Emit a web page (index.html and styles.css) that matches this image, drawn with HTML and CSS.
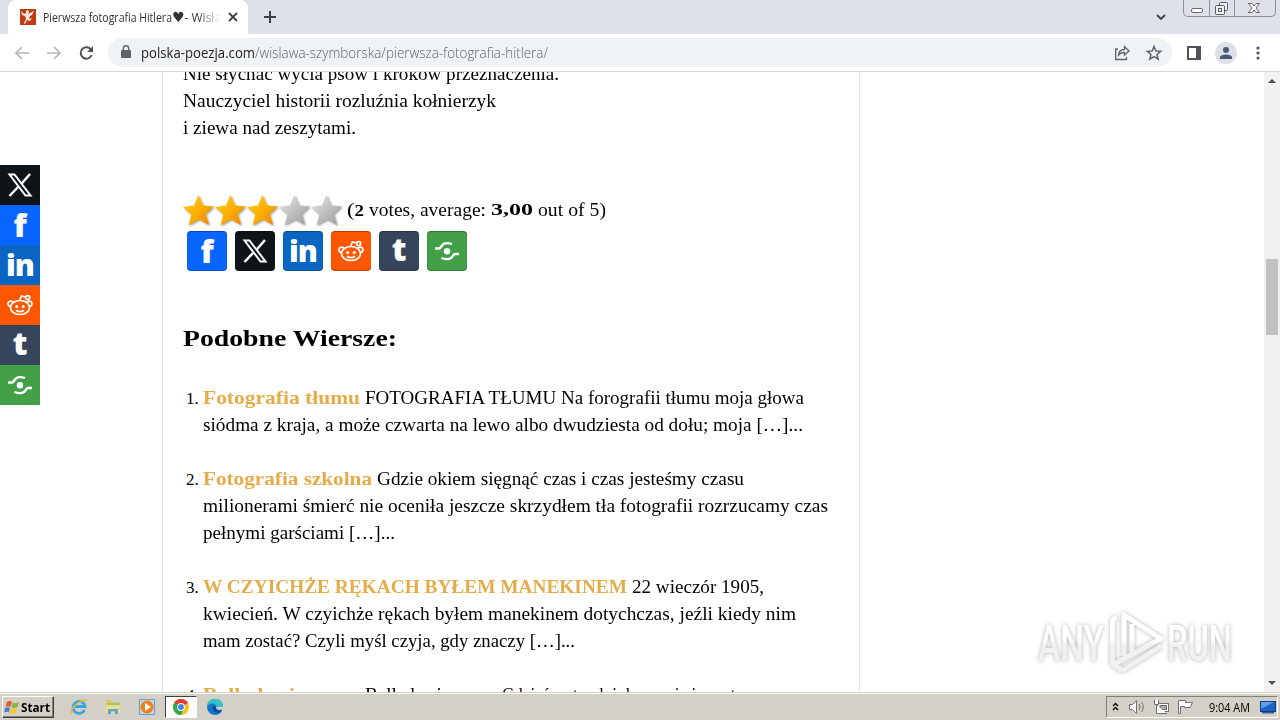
FILE: index.html
```html
<!DOCTYPE html>
<html lang="pl">
<head>
    <meta charset="UTF-8">
    <meta name="viewport" content="width=device-width, initial-scale=1.0">
    <title>Pierwsza fotografia Hitlera</title>
    <link rel="stylesheet" href="styles.css">
</head>
<body>
    <!-- shared icons -->
    <svg class="defs">
        <defs>
            <linearGradient id="gold" x1="0" y1="0" x2="1" y2="1">
                <stop offset="0" stop-color="#ffd21c"/>
                <stop offset="0.5" stop-color="#ffb000"/>
                <stop offset="1" stop-color="#f08000"/>
            </linearGradient>
            <linearGradient id="silver" x1="0" y1="0" x2="1" y2="1">
                <stop offset="0" stop-color="#e6e6e6"/>
                <stop offset="1" stop-color="#9a9a9a"/>
            </linearGradient>
            <symbol id="star" viewBox="0 0 32 32">
                <path d="M15.500 0 L20.200 10.500 L31 11.500 L22.700 19 L26 30 L16 24.500 L5.500 30.500 L8.300 19.500 L0 12 L11 10.500 Z"/>
            </symbol>
            <symbol id="x" viewBox="0 0 40 40">
                <g fill="none" stroke="#fff">
                    <path stroke-width="2" d="M9.500 9.500 H14.500 L30.500 30.500 H25.500 Z"/>
                    <path stroke-width="2.500" d="M30 9 L21.500 18.700 M18 22 L9.500 31"/>
                </g>
            </symbol>
            <symbol id="reddit" viewBox="0 0 40 40">
                <g fill="none" stroke="#fff" stroke-width="1.700">
                    <ellipse cx="20" cy="22.500" rx="9.500" ry="7"/>
                    <path d="M13 17.500 A2.700 2.700 0 1 0 10.300 21.500 M27 17.500 A2.700 2.700 0 1 1 29.700 21.500 M19.500 15.500 L21.500 11 L25.500 12"/>
                    <circle cx="27.700" cy="12.600" r="2"/>
                    <path d="M16 25.300 Q20 28 24 25.300"/>
                </g>
                <circle cx="16.700" cy="21.500" r="1.600" fill="#fff"/>
                <circle cx="23.300" cy="21.500" r="1.600" fill="#fff"/>
            </symbol>
            <symbol id="share" viewBox="0 0 40 40">
                <circle cx="20" cy="20.300" r="3.200" fill="#fff"/>
                <g fill="none" stroke="#fff" stroke-width="2.300">
                    <path d="M8 17.500 H11.500 Q13.500 17.500 14.500 15 Q17.500 10.500 25 13"/>
                    <path d="M32 23 H28.500 Q26.500 23 25.500 25.500 Q22 30 14.500 27"/>
                </g>
            </symbol>
            <linearGradient id="fade" gradientUnits="userSpaceOnUse" x1="0" y1="8" x2="0" y2="68">
                <stop offset="0.45" stop-color="#fff"/>
                <stop offset="0.55" stop-color="#f1f1f1"/>
            </linearGradient>
        </defs>
    </svg>

    <div class="tabs">
        <div class="tab">
            <svg class="favicon" width="16" height="16" viewBox="0 0 16 16">
                <rect width="16" height="16" fill="#bf3c14"/>
                <path d="M1 2 L4 5 L6 4 L6 2 L8 1 L9 3 L8 5 L14 2 L12 6 L10 7 L9 10 L12 9 L10 12 L7 11 L5 15 L4 14 L6 10 L5 7 L2 6 Z" fill="#ffe9dc"/>
            </svg>
            <div class="tab-title"><span data-fit="129">Pierwsza fotografia Hitlera</span><span class="heart">♥</span><span>- Wisła</span></div>
            <svg width="10" height="10" viewBox="0 0 10 10"><path d="M1 1 L9 9 M9 1 L1 9" stroke="#3c4043" stroke-width="1.800"/></svg>
        </div>
        <svg class="new-tab" width="12" height="12" viewBox="0 0 12 12"><path d="M6 0 V12 M0 6 H12" stroke="#3c4043" stroke-width="2"/></svg>
        <svg class="tab-search" width="10" height="7" viewBox="0 0 10 7"><path d="M1 1 L5 5 L9 1" fill="none" stroke="#3c4043" stroke-width="1.800"/></svg>
        <div class="win-buttons">
            <span><svg width="26" height="16"><rect x="7.500" y="8.500" width="11" height="4" rx="1.500" fill="#fff" stroke="#63676f"/></svg></span>
            <span><svg width="25" height="16"><g fill="#eef0f4" stroke="#555a63"><rect x="9.500" y="2.500" width="8" height="8" rx="1"/><rect x="5.500" y="5.500" width="9" height="9" rx="1"/><rect x="8.500" y="8.500" width="3" height="3"/></g></svg></span>
            <span><svg width="40" height="16"><path d="M13.500 3.500 H17 L19 6 L21 3.500 H24.500 L21 8 L24.500 12.500 H21 L19 10 L17 12.500 H13.500 L17 8 Z" fill="#fff" stroke="#63676f"/></svg></span>
        </div>
    </div>

    <div class="toolbar">
        <svg class="nav" width="96" height="36" viewBox="0 0 96 36">
            <g fill="none" stroke="#b4b6b9" stroke-width="1.700">
                <path d="M29 18 H16 M22 12 L16 18 L22 24"/>
                <path d="M47 18 H60 M54 12 L60 18 L54 24"/>
            </g>
            <path d="M91.300 15 A5.700 5.700 0 1 0 91.700 20" fill="none" stroke="#505357" stroke-width="2"/>
            <path d="M93 11 V17 H87 Z" fill="#505357"/>
        </svg>
        <div class="omnibox">
            <svg class="lock" width="10" height="13" viewBox="0 0 10 13">
                <rect y="5" width="10" height="8" rx="1" fill="#5f6368"/>
                <path d="M2.300 6 V3.500 A2.700 2.700 0 0 1 7.700 3.500 V6" fill="none" stroke="#5f6368" stroke-width="1.400"/>
            </svg>
            <span class="host" data-fit="114">polska-poezja.com</span><span class="path" data-fit="293">/wislawa-szymborska/pierwsza-fotografia-hitlera/</span>
            <svg class="omni-icons" width="56" height="28" viewBox="0 0 56 28">
                <g fill="none" stroke="#5f6368" stroke-width="1.300">
                    <path d="M4 10 H1.700 V20.500 H12.500 V18"/>
                    <path d="M4.500 16 Q5 10.500 10.500 10.500 V7.500 L15 12 L10.500 16 V13.500 Q6.500 13.500 4.500 16 Z"/>
                    <path stroke-width="1.500" d="M40 7.500 L41.900 12 L46.700 12.300 L43 15.500 L44.200 20.200 L40 17.600 L35.800 20.200 L37 15.500 L33.300 12.300 L38.100 12 Z"/>
                </g>
            </svg>
        </div>
        <svg class="side-panel" width="14" height="14"><rect x="1" y="1" width="12" height="12" fill="none" stroke="#505357" stroke-width="2"/><rect x="9" width="5" height="14" fill="#505357"/></svg>
        <svg class="avatar" width="22" height="22"><circle cx="11" cy="11" r="11" fill="#dde1e7"/><circle cx="11" cy="8" r="3" fill="#4a5878"/><path d="M5 17 V15 Q6 12.500 11 12.500 Q16 12.500 17 15 V17 Z" fill="#4a5878"/></svg>
        <svg class="menu" width="4" height="14"><g fill="#505357"><circle cx="2" cy="2" r="1.600"/><circle cx="2" cy="7" r="1.600"/><circle cx="2" cy="12" r="1.600"/></g></svg>
    </div>

    <div class="page">
        <main class="article">
            <div class="line"><span data-fit="376">Nie słychać wycia psów i kroków przeznaczenia.</span></div>
            <div class="line"><span data-fit="313">Nauczyciel historii rozluźnia kołnierzyk</span></div>
            <div class="line"><span data-fit="173">i ziewa nad zeszytami.</span></div>

            <div class="rating">
                <svg width="32" height="32"><use href="#star" fill="url(#gold)"/></svg>
                <svg width="32" height="32"><use href="#star" fill="url(#gold)"/></svg>
                <svg width="32" height="32"><use href="#star" fill="url(#gold)"/></svg>
                <svg width="32" height="32"><use href="#star" fill="url(#silver)"/></svg>
                <svg width="32" height="32"><use href="#star" fill="url(#silver)"/></svg>
                <div class="line votes"><span data-fit="17">(<b>2</b></span><span data-fit="117">votes, average:</span><b data-fit="42">3,00</b><span data-fit="68">out of 5)</span></div>
            </div>

            <div class="share-row">
                <a class="share facebook"><span>f</span></a>
                <a class="share twitter"><svg><use href="#x"/></svg></a>
                <a class="share linkedin"><span>in</span></a>
                <a class="share reddit"><svg><use href="#reddit"/></svg></a>
                <a class="share tumblr"><span>t</span></a>
                <a class="share more"><svg><use href="#share"/></svg></a>
            </div>

            <h3><span data-fit="214">Podobne Wiersze:</span></h3>
            <ol>
                <li>
                    <div class="line"><a data-fit="157">Fotografia tłumu</a><span data-fit="439">FOTOGRAFIA TŁUMU Na forografii tłumu moja głowa</span></div>
                    <div class="line"><span data-fit="600">siódma z kraja, a może czwarta na lewo albo dwudziesta od dołu; moja […]...</span></div>
                </li>
                <li>
                    <div class="line"><a data-fit="169">Fotografia szkolna</a><span data-fit="367">Gdzie okiem sięgnąć czas i czas jesteśmy czasu</span></div>
                    <div class="line"><span data-fit="625">milionerami śmierć nie oceniła jeszcze skrzydłem tła fotografii rozrzucamy czas</span></div>
                    <div class="line"><span data-fit="192">pełnymi garściami […]...</span></div>
                </li>
                <li>
                    <div class="line"><a data-fit="424">W CZYICHŻE RĘKACH BYŁEM MANEKINEM</a><span data-fit="132">22 wieczór 1905,</span></div>
                    <div class="line"><span data-fit="593">kwiecień. W czyichże rękach byłem manekinem dotychczas, jeźli kiedy nim</span></div>
                    <div class="line"><span data-fit="372">mam zostać? Czyli myśl czyja, gdy znaczy […]...</span></div>
                </li>
                <li>
                    <div class="line"><a data-fit="157">Ballada ziemowa</a><span data-fit="132">Ballada ziemowa</span><span data-fit="242">Gdzieś, ostrych i drzewa i zimy oto</span></div>
                </li>
            </ol>
        </main>

        <div class="share-bar">
            <a class="share twitter"><svg><use href="#x"/></svg></a>
            <a class="share facebook"><span>f</span></a>
            <a class="share linkedin"><span>in</span></a>
            <a class="share reddit"><svg><use href="#reddit"/></svg></a>
            <a class="share tumblr"><span>t</span></a>
            <a class="share more"><svg><use href="#share"/></svg></a>
        </div>

        <div class="scrollbar">
            <svg width="8" height="4"><path d="M0 4 L4 0 L8 4 Z" fill="#505050"/></svg>
            <div class="thumb"></div>
            <svg width="8" height="4"><path d="M0 0 L4 4 L8 0 Z" fill="#505050"/></svg>
        </div>

        <svg class="watermark" width="210" height="76" viewBox="0 0 210 76">
            <text x="8" y="57" textLength="66" lengthAdjust="spacingAndGlyphs">ANY</text>
            <g fill="none" stroke="url(#fade)" stroke-width="5" stroke-linejoin="round">
                <path d="M82.500 62 V18 Q82.500 14 87 14"/>
                <path d="M133 36 L94 11 V44 M94 11 V52"/>
                <path d="M102 20 V48"/>
                <path d="M82.500 61 L130 35 M92 67 L131 42 M82.500 61 Q88 62 92 67"/>
            </g>
            <text x="137" y="57" textLength="65" lengthAdjust="spacingAndGlyphs">RUN</text>
        </svg>
    </div>

    <div class="taskbar">
        <div class="start">
            <svg width="16" height="16" viewBox="0 0 16 16">
                <path d="M3 3 Q6 1 8 3 L6.500 8 Q4 6.500 1.500 8 Z" fill="#e8592b"/>
                <path d="M9 3.500 Q12 5 15 3 L13.500 8 Q10.500 9.500 7.500 8.500 Z" fill="#7fb83d"/>
                <path d="M1.200 9 Q4 7.500 6 9 L4.800 13.500 Q2.500 12 0 13.500 Z" fill="#3f83d3"/>
                <path d="M7 9.500 Q10 11 13 9 L11.800 14 Q8.500 15.500 5.800 14 Z" fill="#f8c52c"/>
            </svg>
            <span data-fit="29">Start</span>
        </div>
        <div class="quick">
            <span class="app"><svg width="18" height="18" viewBox="0 0 18 18">
                <path d="M14.500 12 A6 6 0 1 1 15 8.500 H5" fill="none" stroke="#3aa5e0" stroke-width="2.800"/>
                <path d="M2 16 Q-1 12 7 6 Q15 0 16.500 3" fill="none" stroke="#e8bc3c" stroke-width="1.500"/>
            </svg></span>
            <span class="app"><svg width="18" height="18" viewBox="0 0 18 18">
                <path d="M2 2 H7 L8 4 H15 V15 H2 Z" fill="#e9c659"/>
                <rect x="3" y="5" width="13" height="3" fill="#8fc98a"/>
                <path d="M2 7 H16 V15 H2 Z" fill="#f5dc85"/>
                <path d="M4 16 V11 H14 V16 H11 V13.500 H7 V16 Z" fill="#5ba6d6"/>
            </svg></span>
            <span class="app"><svg width="18" height="18" viewBox="0 0 18 18">
                <rect x="1.500" y="1.500" width="15" height="15" fill="#bcd7ee" stroke="#6c9cc8"/>
                <circle cx="9" cy="9" r="6.500" fill="#f08119"/>
                <path d="M7 5 L13 9 L7 13 Z" fill="#fff"/>
            </svg></span>
            <span class="app active"><svg width="16" height="16" viewBox="0 0 16 16">
                <circle cx="8" cy="8" r="8" fill="#fbc116"/>
                <path d="M8 8 L1.070 4 A8 8 0 0 1 14.930 4 Z" fill="#e33b2e"/>
                <path d="M8 8 L1.070 4 A8 8 0 0 0 8 16 L11 9.500 Z" fill="#2da94f"/>
                <circle cx="8" cy="8" r="3.900" fill="#fff"/>
                <circle cx="8" cy="8" r="2.900" fill="#4285f4"/>
            </svg></span>
            <span class="app"><svg width="16" height="16" viewBox="0 0 16 16">
                <circle cx="8" cy="8" r="8" fill="#1377cf"/>
                <path d="M0 8 A8 8 0 0 1 16 7 Q16 10.500 12 10.500 Q9 10.500 9.500 8 Q9 4 4.500 4.500 Q1 5 0 8 Z" fill="#35c1c6"/>
                <path d="M5.500 8 Q5 13 11 14 Q13.500 13.500 15 11.500 Q9.500 13 9 8.500 Q8 6 5.500 8 Z" fill="#124a92"/>
                <path d="M9.200 8 Q9 11.500 14.500 10.500 L16 12 V8 Z" fill="#d4d0c8"/>
            </svg></span>
        </div>
        <div class="tray">
            <svg width="90" height="22" viewBox="0 0 90 22">
                <path d="M6 10 L8.500 7.500 L11 10 M6 14 L8.500 11.500 L11 14" fill="none" stroke="#111" stroke-width="1.500"/>
                <g fill="#fff" stroke="#73716d">
                    <path d="M22.500 8.500 H25.500 L29.500 4.500 V17.500 L25.500 13.500 H22.500 Z"/>
                    <path fill="none" d="M32 8 Q34 11 32 14 M34.500 6 Q38 11 34.500 16"/>
                    <rect x="50.500" y="7.500" width="11" height="8"/>
                    <rect x="53" y="9.500" width="6.500" height="4" fill="#aaa"/>
                    <path d="M47.500 4 V8.500 H51.500 V4 M49.500 9 V17.500 H60"/>
                    <path d="M71.500 17.500 V4.500 H78.500 V6.500 H85.500 L83 11.500 H77.500 V10.500 H73.500 V17.500 Z"/>
                </g>
            </svg>
            <span class="clock" data-fit="41">9:04 AM</span>
            <svg class="desktop" width="16" height="14"><rect x=".5" y="1.500" width="15" height="10" fill="#1c62c4" stroke="#123c80"/><path d="M1 2 H14 L1 9 Z" fill="#5d9ee8"/><rect x="2" y="12" width="12" height="1.500" fill="#3c5b8a"/></svg>
        </div>
    </div>

    <script>
        // Stretch each label to the width it was laid out for
        const labels = [...document.querySelectorAll('[data-fit]')];
        const widths = labels.map(el => el.getBoundingClientRect().width);

        labels.forEach((el, i) => {
            el.style.width = el.dataset.fit + 'px';
            el.style.transform = 'scaleX(' + el.dataset.fit / widths[i] + ')';
        });
    </script>
</body>
</html>
```
FILE: styles.css
```css
* {
    box-sizing: border-box;
}

body {
    margin: 0;
    width: 1280px;
    height: 720px;
    overflow: hidden;
    display: flex;
    flex-direction: column;
    background: #fff;
    font-family: "Open Sans", "Noto Sans", sans-serif;
}

svg {
    display: block;
    flex: none;
}

.defs {
    position: absolute;
    width: 0;
    height: 0;
}

[data-fit] {
    display: inline-block;
    flex: none;
    white-space: nowrap;
    transform-origin: left;
}

/* browser window */
.tabs {
    height: 34px;
    flex: none;
    display: flex;
    background: #dee1e9;
    padding-left: 8px;
}

.tab {
    width: 240px;
    height: 34px;
    background: #fff;
    border-radius: 8px 8px 0 0;
    display: flex;
    align-items: center;
    padding-left: 12px;
}

.tab-title {
    display: flex;
    align-items: center;
    white-space: nowrap;
    width: 177px;
    margin: 0 8px 0 7px;
    overflow: hidden;
    font-size: 12px;
    color: #303236;
    -webkit-mask-image: linear-gradient(to right, #000 155px, transparent 177px);
    mask-image: linear-gradient(to right, #000 155px, transparent 177px);
}

.heart {
    width: 15px;
    font: 14px/16px "DejaVu Sans", sans-serif;
}

.new-tab {
    margin: 11px 0 0 16px;
}

.tab-search {
    margin: 14px 17px 0 auto;
}

.win-buttons {
    display: flex;
    width: 93px;
    height: 17px;
    margin-right: 4px;
    border: 1px solid #8b8f98;
    border-top: 0;
    border-radius: 0 0 5px 5px;
}

.win-buttons span + span {
    border-left: 1px solid #8b8f98;
}

.win-buttons span:nth-child(-n+2) {
    width: 25px;
}

.toolbar {
    height: 38px;
    flex: none;
    display: flex;
    align-items: center;
    border-bottom: 1px solid #d5d7da;
}

.omnibox {
    width: 1064px;
    height: 29px;
    margin-left: 12px;
    border-radius: 15px;
    background: #f0f3f6;
    display: flex;
    align-items: center;
    font-size: 14px;
    font-weight: 300;
}

.lock {
    margin: 0 10px 2px 13px;
}

.host {
    color: #202124;
    font-weight: 400;
}

.path {
    color: #5f6368;
}

.omni-icons {
    margin: 0 2px 0 auto;
}

.side-panel {
    margin-left: 15px;
}

.avatar {
    margin-left: 14px;
}

.menu {
    margin-left: 19px;
}

/* poem page */
.page {
    position: relative;
    height: 620px;
    flex: none;
    overflow: hidden;
}

.article {
    width: 698px;
    height: 700px;
    margin: -12px 0 0 162px;
    padding-left: 20px;
    border: 1px solid #e3e3e3;
    border-width: 0 1px;
    font-family: "Liberation Serif", serif;
    font-size: 19px;
    color: #000;
}

.line {
    height: 27px;
    line-height: 27px;
    display: flex;
    gap: 5px;
    white-space: nowrap;
}

.rating {
    display: flex;
    height: 32px;
    margin-top: 54px;
}

.rating svg {
    filter: drop-shadow(1px 1px 1px rgba(0, 0, 0, 0.4));
}

.votes {
    margin: 1px 0 0 4px;
}

.votes b {
    font-size: 16px;
}

.share-row {
    display: flex;
    gap: 8px;
    margin: 4px 0 0 4px;
}

.share {
    width: 40px;
    height: 40px;
    display: flex;
    justify-content: center;
    align-items: center;
    color: #fff;
    font: 800 32px/32px "Open Sans", sans-serif;
}

.share svg {
    width: 40px;
    height: 40px;
}

.share-row .share {
    border-radius: 4px;
    box-shadow: inset 0 1px 1px rgba(0, 0, 0, 0.3), inset 0 -1px 1px rgba(0, 0, 0, 0.2);
}

.facebook {
    background: #0866ff;
}

.twitter {
    background: #0f1419;
}

.linkedin {
    background: #0a66c2;
    letter-spacing: -1px;
    font-size: 30px;
}

.linkedin span {
    margin-top: -1px;
}

.reddit {
    background: #ff5700;
}

.tumblr {
    background: #35465c;
}

.tumblr span {
    margin-top: -4px;
}

.more {
    background: #43a047;
}

h3 {
    margin: 51px 0 0;
    height: 32px;
    font-size: 24px;
    line-height: 32px;
}

ol {
    margin: 30px 0 0;
    padding-left: 20px;
}

li {
    margin-bottom: 27px;
    line-height: 27px;
}

li::marker {
    font-size: 17px;
}

li a {
    color: #e5ac49;
    font-weight: bold;
}

.share-bar {
    position: absolute;
    left: 0;
    top: 93px;
}

.scrollbar {
    position: absolute;
    top: 0;
    right: 0;
    width: 16px;
    height: 620px;
    padding: 7px 0;
    display: flex;
    flex-direction: column;
    align-items: center;
    background: #f1f1f1;
}

.thumb {
    width: 12px;
    height: 76px;
    margin: 176px 0 auto;
    background: #c1c1c1;
}

.watermark {
    position: absolute;
    left: 1030px;
    top: 532px;
    filter: drop-shadow(0 0 2px rgba(0, 0, 0, 0.3));
}

.watermark text {
    font: 500 50px Roboto, sans-serif;
    fill: url(#fade);
}

/* taskbar */
.taskbar {
    height: 28px;
    flex: none;
    display: flex;
    align-items: center;
    padding: 2px 2px 0;
    background: #d4d0c8;
    box-shadow: inset 0 1px #d4d0c8, inset 0 2px #fff;
}

.start {
    width: 52px;
    height: 22px;
    display: flex;
    align-items: center;
    gap: 1px;
    padding-left: 1px;
    border: 1px solid;
    border-color: #fff #404040 #404040 #fff;
    box-shadow: inset -1px -1px #808080;
    font-size: 12px;
    font-weight: bold;
    color: #000;
}

.quick {
    display: flex;
    margin-left: 9px;
    gap: 2px;
}

.app {
    width: 32px;
    height: 22px;
    display: flex;
    align-items: center;
    justify-content: center;
}

.active {
    background: #fff;
    border: 1px solid;
    border-color: #404040 #fff #fff #404040;
}

.tray {
    width: 172px;
    height: 22px;
    margin-left: auto;
    display: flex;
    align-items: center;
    border: 1px solid;
    border-color: #808080 #fff #fff #808080;
    font-size: 12px;
    color: #000;
}

.clock {
    margin-left: 12px;
}

.desktop {
    margin-left: 10px;
}
```
